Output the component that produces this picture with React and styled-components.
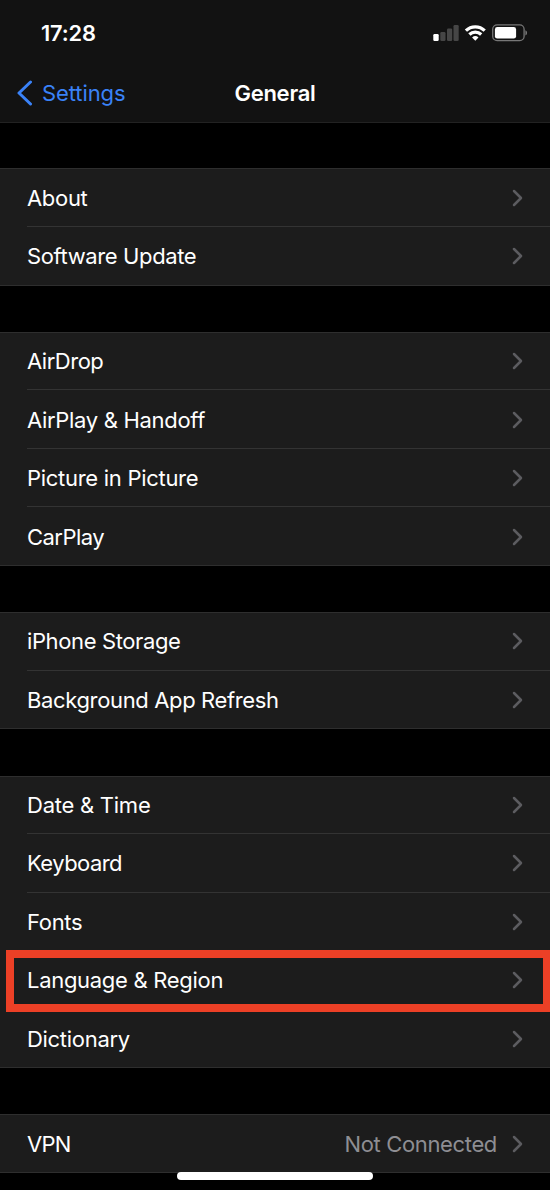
import styled, { createGlobalStyle } from "styled-components";

const GlobalStyle = createGlobalStyle`
  * {
    box-sizing: border-box;
  }

  body {
    margin: 0;
    background: #000;
    overflow: hidden;
  }
`;

const GROUPS = [
  [
    { label: "About", spacing: -0.32 },
    { label: "Software Update", spacing: -0.38 },
  ],
  [
    { label: "AirDrop", spacing: -0.48 },
    { label: "AirPlay & Handoff", spacing: -0.31 },
    { label: "Picture in Picture", spacing: -0.29 },
    { label: "CarPlay", spacing: -0.55 },
  ],
  [
    { label: "iPhone Storage", spacing: -0.38 },
    { label: "Background App Refresh", spacing: -0.36 },
  ],
  [
    { label: "Date & Time", spacing: -0.25 },
    { label: "Keyboard", spacing: -0.55 },
    { label: "Fonts", spacing: -0.34 },
    { label: "Language & Region", spacing: -0.3, marked: true },
    { label: "Dictionary", spacing: -0.3 },
  ],
  [{ label: "VPN", value: "Not Connected", spacing: -0.7 }],
];

const Screen = styled.div`
  position: relative;
  width: 550px;
  height: 1190px;
  overflow: hidden;
  background: #000;
  color: #fff;
  font-family: Inter, "Liberation Sans", sans-serif;
  font-size: 22px;
  line-height: 28px;
`;

const Header = styled.header`
  height: 123px;
  background: #121212;
  border-bottom: 1px solid #222;
`;

const StatusBar = styled.div`
  display: flex;
  align-items: center;
  justify-content: space-between;
  height: 66px;
  padding: 0 22px 0 41px;
`;

const Time = styled.span`
  font-size: 21.8px;
  font-weight: 600;
  letter-spacing: -0.15px;
`;

const NavBar = styled.nav`
  display: grid;
  grid-template-columns: 1fr auto 1fr;
  align-items: center;
  height: 54px;
  padding: 0 17px;
`;

const BackLink = styled.a`
  display: flex;
  align-items: center;
  gap: 10px;
  color: #3a82f7;
  letter-spacing: -0.1px;
`;

const Title = styled.h1`
  margin: 0;
  font-size: 22px;
  font-weight: 600;
  letter-spacing: -0.25px;
`;

const List = styled.main`
  display: flex;
  flex-direction: column;
  gap: 46.3px;
  padding-top: 45.49px;
`;

const Group = styled.section`
  background: #1c1c1c;
  box-shadow: inset 0 1px #2e2e2e, inset 0 -1px #2e2e2e;
`;

const Row = styled.div`
  position: relative;
  display: flex;
  height: 58.52px;
  padding-left: 27px;
`;

const RowBody = styled.div`
  display: flex;
  flex: 1;
  align-items: center;
  padding-right: 27px;

  ${Row}:not(:last-child) > & {
    box-shadow: inset 0 -1px #333;
  }
`;

const Label = styled.span`
  flex: 1;
  letter-spacing: ${({ $spacing }) => $spacing}px;
`;

const Value = styled.span`
  margin-right: 15px;
  color: #8e8e93;
  letter-spacing: -0.35px;
`;

const Marker = styled.div`
  position: absolute;
  z-index: 1;
  top: -1px;
  left: 6px;
  width: 545.3px;
  height: 62px;
  border: 8px solid #ec4026;
`;

const HomeIndicator = styled.div`
  position: absolute;
  bottom: 10px;
  left: 177px;
  width: 196px;
  height: 8px;
  border-radius: 4px;
  background: #fff;
`;

const StatusIcons = () => (
  <svg width="95" height="18" viewBox="433 24 95 18" fill="none">
    <rect x="433.3" y="34" width="5.4" height="7" rx="1.2" fill="#fff" />
    <rect x="440.3" y="32" width="5.2" height="9" rx="1.2" fill="#464646" />
    <rect x="447" y="28.5" width="5.2" height="12.5" rx="1.2" fill="#464646" />
    <rect x="453.5" y="25" width="5.2" height="16" rx="1.2" fill="#464646" />
    <g stroke="#fff" strokeWidth="3.2">
      <path d="M465.9 30.6a13.5 13.5 0 0 1 18.8 0" />
      <path d="M469.4 34.5a8.4 8.4 0 0 1 11.8 0" />
    </g>
    <path d="M475.3 40.7l-3.2-3.3a4.8 4.8 0 0 1 6.4 0z" fill="#fff" />
    <rect
      x="492.7"
      y="24.9"
      width="31.4"
      height="15.8"
      rx="4.4"
      stroke="#777"
      strokeWidth="1.3"
    />
    <rect x="494.9" y="27" width="21.2" height="11.6" rx="2.4" fill="#fff" />
    <path d="M525.4 30.2c2.2.8 2.2 4.4 0 5.2z" fill="#777" />
  </svg>
);

const BackIcon = () => (
  <svg width="15" height="26" viewBox="0 0 15 26" fill="none">
    <path
      d="M13.5 2L2 13l11.5 11"
      stroke="#3a82f7"
      strokeWidth="3"
      strokeLinecap="round"
      strokeLinejoin="round"
    />
  </svg>
);

const Chevron = () => (
  <svg width="11" height="18" viewBox="0 0 11 18" fill="none">
    <path
      d="M2 2l7 7-7 7"
      stroke="#5c5c60"
      strokeWidth="2.5"
      strokeLinecap="round"
      strokeLinejoin="round"
    />
  </svg>
);

const SettingsRow = ({ label, value, marked, spacing }) => (
  <Row>
    <RowBody>
      <Label $spacing={spacing}>{label}</Label>
      {value && <Value>{value}</Value>}
      <Chevron />
    </RowBody>
    {marked && <Marker />}
  </Row>
);

export default function App() {
  return (
    <Screen>
      <GlobalStyle />
      <Header>
        <StatusBar>
          <Time>17:28</Time>
          <StatusIcons />
        </StatusBar>
        <NavBar>
          <BackLink>
            <BackIcon />
            Settings
          </BackLink>
          <Title>General</Title>
        </NavBar>
      </Header>
      <List>
        {GROUPS.map((rows) => (
          <Group key={rows[0].label}>
            {rows.map((row) => (
              <SettingsRow key={row.label} {...row} />
            ))}
          </Group>
        ))}
      </List>
      <HomeIndicator />
    </Screen>
  );
}
